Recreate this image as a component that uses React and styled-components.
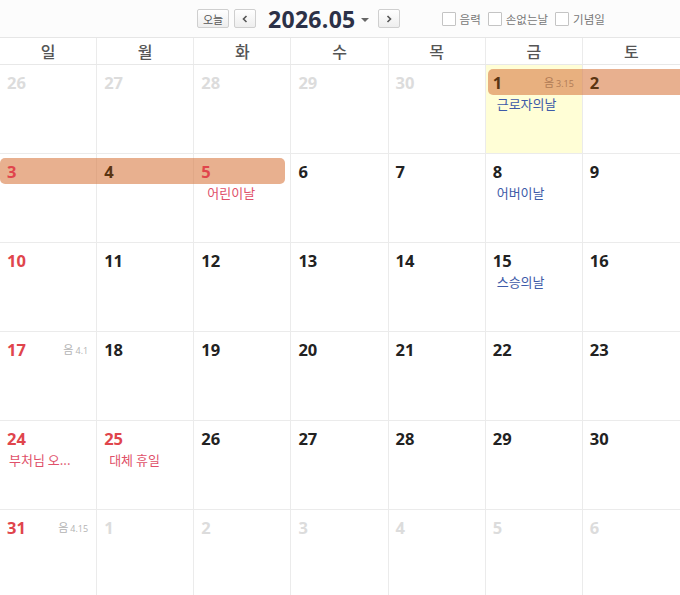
import React from 'react';
import styled, { createGlobalStyle } from 'styled-components';

const GlobalStyle = createGlobalStyle`
  html, body {
    margin: 0;
    padding: 0;
    background: #fff;
    font-family: "Open Sans", "Noto Sans CJK KR", sans-serif;
  }
`;

const Page = styled.div`
  width: 680px;
  height: 595px;
  overflow: hidden;
  background: #fff;
`;

const TopBar = styled.div`
  display: flex;
  align-items: center;
  height: 38px;
  padding-left: 197px;
  border-bottom: 1px solid #e6e6e6;
  background: #fcfcfc;
  box-sizing: border-box;
`;

const NavButton = styled.button`
  height: 19px;
  width: ${p => (p.wide ? '32px' : '22px')};
  padding: 0;
  margin-right: ${p => p.gap || 0}px;
  border: 1px solid #cfcfcf;
  border-radius: 2px;
  background: linear-gradient(#ffffff, #eeeeee);
  color: #555;
  font-family: "Noto Sans CJK KR", sans-serif;
  font-size: 11px;
  display: flex;
  align-items: center;
  justify-content: center;
  box-sizing: border-box;
`;

const Chevron = styled.svg`
  width: 8px;
  height: 8px;
`;

const Title = styled.div`
  display: flex;
  align-items: center;
  font-family: "Open Sans", sans-serif;
  font-weight: 700;
  font-size: 23px;
  color: #2c3147;
  letter-spacing: 0.3px;
  margin-right: 9px;
`;

const Caret = styled.span`
  display: inline-block;
  width: 0;
  height: 0;
  margin-left: 5px;
  margin-top: 2px;
  border-left: 4px solid transparent;
  border-right: 4px solid transparent;
  border-top: 4px solid #666;
`;

const Options = styled.div`
  display: flex;
  align-items: center;
  gap: 7px;
  margin-left: 42px;
`;

const Option = styled.label`
  display: flex;
  align-items: center;
  gap: 4px;
  font-family: "Noto Sans CJK KR", sans-serif;
  font-size: 11.5px;
  color: #777;
`;

const Box = styled.span`
  width: 12px;
  height: 12px;
  border: 1px solid #c4c4c4;
  background: #fff;
  border-radius: 1px;
`;

const DayNames = styled.div`
  display: grid;
  grid-template-columns: repeat(7, 1fr);
  height: 26px;
  border-bottom: 1px solid #e8e8e8;
`;

const DayName = styled.div`
  display: flex;
  align-items: center;
  justify-content: center;
  font-family: "Noto Sans CJK KR", sans-serif;
  font-size: 16px;
  font-weight: 500;
  color: #555;
  border-right: 1px solid #ebebeb;
  &:last-child { border-right: none; }
`;

const Week = styled.div`
  position: relative;
  display: grid;
  grid-template-columns: repeat(7, 1fr);
  height: 89px;
  border-bottom: 1px solid #ebebeb;
  box-sizing: border-box;
`;

const Cell = styled.div`
  position: relative;
  border-right: 1px solid #ebebeb;
  background: ${p => (p.today ? '#fffed6' : 'transparent')};
  padding: 6px 8px 0 7px;
  &:nth-child(7) { border-right: none; }
`;

const CellHead = styled.div`
  position: relative;
  z-index: 2;
  display: flex;
  align-items: center;
  justify-content: space-between;
  height: 22px;
`;

const colors = {
  muted: '#dcdcdc',
  red: '#e0454c',
  dark: '#222',
  bar: '#5a3412',
};

const Num = styled.span`
  font-family: "Open Sans", sans-serif;
  font-weight: 700;
  font-size: 16.5px;
  color: ${p => colors[p.tone]};
`;

const Lunar = styled.span`
  font-family: "Noto Sans CJK KR", sans-serif;
  font-size: 11px;
  color: ${p => (p.onBar ? '#b07a55' : '#b3b3b3')};
  & small {
    font-family: "Open Sans", sans-serif;
    font-size: 9px;
    margin-left: 2px;
  }
`;

const Label = styled.div`
  position: relative;
  z-index: 2;
  margin-top: 1px;
  padding-left: ${p => p.indent}px;
  font-family: "Noto Sans CJK KR", sans-serif;
  font-size: 13px;
  color: ${p => (p.kind === 'red' ? '#e0516a' : '#3d5aa8')};
  white-space: nowrap;
`;

const Bar = styled.div`
  position: absolute;
  z-index: 1;
  top: 4px;
  height: 26px;
  border-radius: 5px;
  background: rgba(218, 128, 74, 0.62);
`;

const weeks = [
  {
    days: [
      { n: 26, tone: 'muted' },
      { n: 27, tone: 'muted' },
      { n: 28, tone: 'muted' },
      { n: 29, tone: 'muted' },
      { n: 30, tone: 'muted' },
      { n: 1, tone: 'bar', today: true, lunar: '3.15', label: '근로자의날', kind: 'blue', indent: 4 },
      { n: 2, tone: 'bar' },
    ],
    bar: { left: 488, width: 200 },
  },
  {
    days: [
      { n: 3, tone: 'red' },
      { n: 4, tone: 'bar' },
      { n: 5, tone: 'red', label: '어린이날', kind: 'red', indent: 6 },
      { n: 6, tone: 'dark' },
      { n: 7, tone: 'dark' },
      { n: 8, tone: 'dark', label: '어버이날', kind: 'blue', indent: 4 },
      { n: 9, tone: 'dark' },
    ],
    bar: { left: 0, width: 285 },
  },
  {
    days: [
      { n: 10, tone: 'red' },
      { n: 11, tone: 'dark' },
      { n: 12, tone: 'dark' },
      { n: 13, tone: 'dark' },
      { n: 14, tone: 'dark' },
      { n: 15, tone: 'dark', label: '스승의날', kind: 'blue', indent: 4 },
      { n: 16, tone: 'dark' },
    ],
  },
  {
    days: [
      { n: 17, tone: 'red', lunar: '4.1' },
      { n: 18, tone: 'dark' },
      { n: 19, tone: 'dark' },
      { n: 20, tone: 'dark' },
      { n: 21, tone: 'dark' },
      { n: 22, tone: 'dark' },
      { n: 23, tone: 'dark' },
    ],
  },
  {
    days: [
      { n: 24, tone: 'red', label: '부처님 오...', kind: 'red', indent: 2 },
      { n: 25, tone: 'red', label: '대체 휴일', kind: 'red', indent: 5 },
      { n: 26, tone: 'dark' },
      { n: 27, tone: 'dark' },
      { n: 28, tone: 'dark' },
      { n: 29, tone: 'dark' },
      { n: 30, tone: 'dark' },
    ],
  },
  {
    days: [
      { n: 31, tone: 'red', lunar: '4.15' },
      { n: 1, tone: 'muted' },
      { n: 2, tone: 'muted' },
      { n: 3, tone: 'muted' },
      { n: 4, tone: 'muted' },
      { n: 5, tone: 'muted' },
      { n: 6, tone: 'muted' },
    ],
  },
];

const names = ['일', '월', '화', '수', '목', '금', '토'];

export default function App() {
  return (
    <Page>
      <GlobalStyle />
      <TopBar>
        <NavButton wide gap={5}>오늘</NavButton>
        <NavButton gap={12}>
          <Chevron viewBox="0 0 8 8">
            <path d="M5.5 1 L2.5 4 L5.5 7" fill="none" stroke="#555" strokeWidth="1.6" />
          </Chevron>
        </NavButton>
        <Title>
          2026.05
          <Caret />
        </Title>
        <NavButton>
          <Chevron viewBox="0 0 8 8">
            <path d="M2.5 1 L5.5 4 L2.5 7" fill="none" stroke="#555" strokeWidth="1.6" />
          </Chevron>
        </NavButton>
        <Options>
          <Option><Box />음력</Option>
          <Option><Box />손없는날</Option>
          <Option><Box />기념일</Option>
        </Options>
      </TopBar>
      <DayNames>
        {names.map(n => (
          <DayName key={n}>{n}</DayName>
        ))}
      </DayNames>
      {weeks.map((w, i) => (
        <Week key={i}>
          {w.days.map((d, j) => (
            <Cell key={j} today={d.today}>
              <CellHead>
                <Num tone={d.tone}>{d.n}</Num>
                {d.lunar && (
                  <Lunar onBar={!!w.bar}>
                    음<small>{d.lunar}</small>
                  </Lunar>
                )}
              </CellHead>
              {d.label && (
                <Label kind={d.kind} indent={d.indent}>
                  {d.label}
                </Label>
              )}
            </Cell>
          ))}
          {w.bar && <Bar style={{ left: w.bar.left, width: w.bar.width }} />}
        </Week>
      ))}
    </Page>
  );
}
